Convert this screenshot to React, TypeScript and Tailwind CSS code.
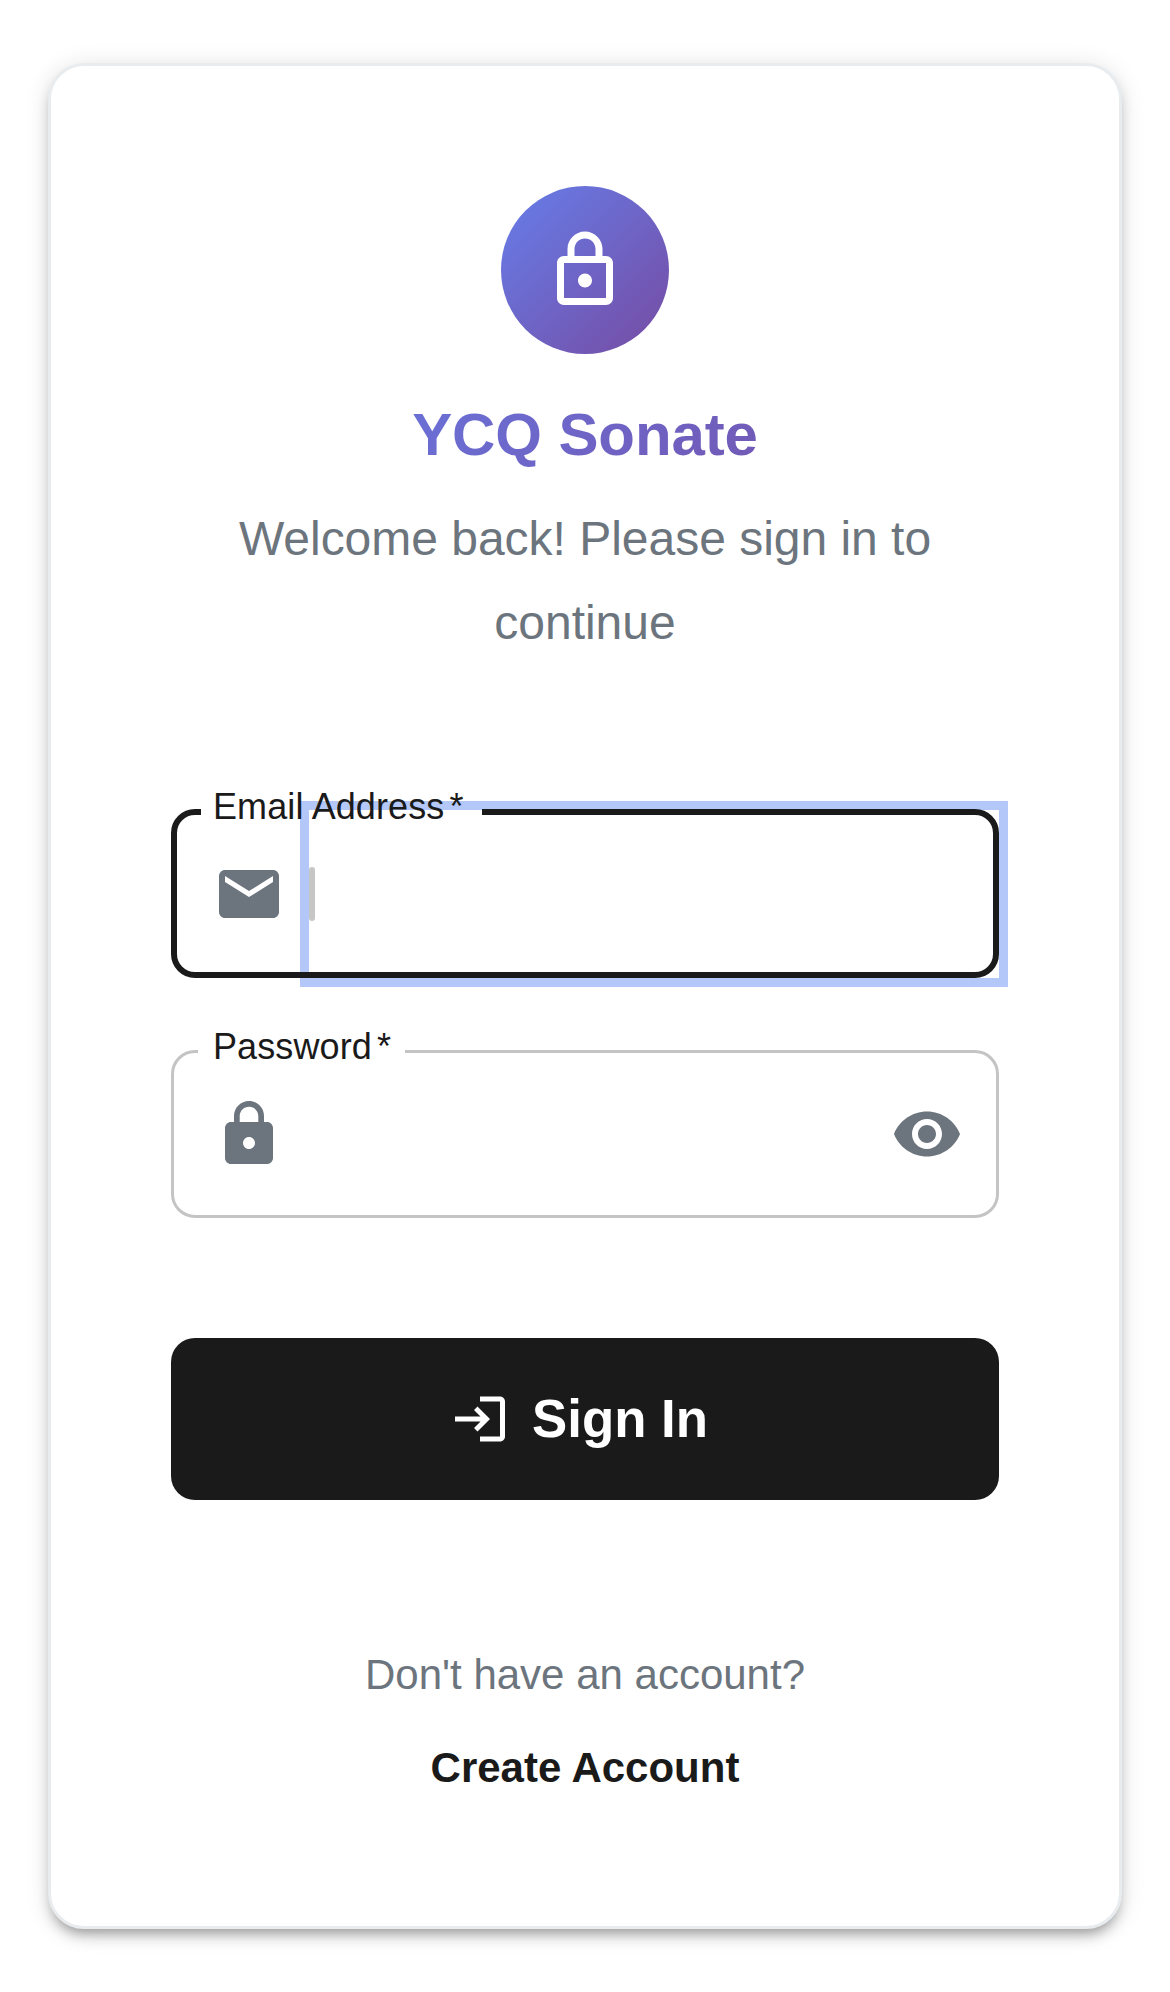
import React from "react";

const paths = {
  lockOutlined:
    "M12 17c1.1 0 2-.9 2-2s-.9-2-2-2-2 .9-2 2 .9 2 2 2zm6-9h-1V6c0-2.76-2.24-5-5-5S7 3.24 7 6v2H6c-1.1 0-2 .9-2 2v10c0 1.1.9 2 2 2h12c1.1 0 2-.9 2-2V10c0-1.1-.9-2-2-2zM9 6c0-1.66 1.34-3 3-3s3 1.34 3 3v2H9V6zM18 20H6V10h12v10z",
  mail: "M20 4H4c-1.1 0-1.99.9-1.99 2L2 18c0 1.1.9 2 2 2h16c1.1 0 2-.9 2-2V6c0-1.1-.9-2-2-2zm0 4l-8 5-8-5V6l8 5 8-5v2z",
  lock: "M18 8h-1V6c0-2.76-2.24-5-5-5S7 3.24 7 6v2H6c-1.1 0-2 .9-2 2v10c0 1.1.9 2 2 2h12c1.1 0 2-.9 2-2V10c0-1.1-.9-2-2-2zm-6 9c-1.1 0-2-.9-2-2s.9-2 2-2 2 .9 2 2-.9 2-2 2zm3.1-9H8.9V6c0-1.71 1.39-3.1 3.1-3.1 1.71 0 3.1 1.39 3.1 3.1v2z",
  eye: "M12 4.5C7 4.5 2.73 7.61 1 12c1.73 4.39 6 7.5 11 7.5s9.27-3.11 11-7.5c-1.73-4.39-6-7.5-11-7.5zM12 17c-2.76 0-5-2.24-5-5s2.24-5 5-5 5 2.24 5 5-2.24 5-5 5zm0-8c-1.66 0-3 1.34-3 3s1.34 3 3 3 3-1.34 3-3-1.34-3-3-3z",
  login:
    "M11 7 9.6 8.4l2.6 2.6H2v2h10.2l-2.6 2.6L11 17l5-5-5-5zm9 12h-8v2h8c1.1 0 2-.9 2-2V5c0-1.1-.9-2-2-2h-8v2h8v14z",
};

function Icon({ name, className }: { name: keyof typeof paths; className: string }) {
  return (
    <svg viewBox="0 0 24 24" fill="currentColor" className={className} aria-hidden="true">
      <path d={paths[name]} />
    </svg>
  );
}

function Label({ text }: { text: string }) {
  return (
    <span className="absolute left-[42px] top-[-27px] flex h-[48px] items-center whitespace-nowrap text-[36px] leading-[48px] tracking-[0.1px] text-[#1a1a1a]">
      {text}
      <span className="ml-[5px]">*</span>
    </span>
  );
}

export default function App() {
  return (
    <main className="flex h-[1992px] w-[1170px] bg-white px-[48px] pt-[63px] font-['Liberation_Sans',Arial,sans-serif]">
      <section className="flex h-[1866px] w-full flex-col rounded-[36px] border-[3px] border-[#e9ecef] bg-white p-[120px] shadow-[0px_9px_9px_-6px_rgba(0,0,0,0.2),0px_9px_12px_0px_rgba(0,0,0,0.14),0px_3px_24px_0px_rgba(0,0,0,0.12)]">
        <header className="flex flex-col items-center text-center">
          <div className="flex size-[168px] items-center justify-center rounded-full bg-[linear-gradient(135deg,#667eea_0%,#764ba2_100%)] text-white">
            <Icon name="lockOutlined" className="size-[84px]" />
          </div>
          <h1 className="mt-[33px] w-full bg-[linear-gradient(135deg,#667eea_0%,#764ba2_100%)] bg-clip-text text-[60px] font-bold leading-[96px] tracking-[-0.1px] text-transparent">
            YCQ Sonate
          </h1>
          <p className="mt-[14px] text-[48px] leading-[84px] tracking-[-0.02px] text-[#6c757d]">
            Welcome back! Please sign in to continue
          </p>
        </header>

        <form className="mt-[145px] flex flex-col" onSubmit={(e) => e.preventDefault()}>
          <div className="relative flex h-[168px] items-center pl-[42px]">
            <Icon name="mail" className="size-[72px] text-[#6c757d]" />
            <div className="absolute inset-y-0 left-[138px] right-0 outline-[9px] outline-solid outline-[#b3c8f8]" />
            <div className="relative ml-[24px] h-[54px] w-[6px] rounded-[3px] bg-[#c6c6c6]" />
            <div className="absolute inset-x-0 -top-px bottom-0 rounded-[24px] border-[6px] border-[#1a1a1a] [clip-path:polygon(0_0,30px_0,30px_10px,311px_10px,311px_0,100%_0,100%_100%,0_100%)]" />
            <Label text="Email Address" />
          </div>

          <div className="relative mt-[72px] flex h-[168px] items-center justify-between pl-[42px] pr-[36px] text-[#6c757d]">
            <Icon name="lock" className="size-[72px]" />
            <Icon name="eye" className="size-[72px]" />
            <div className="absolute inset-0 rounded-[24px] border-[3px] border-[#c4c4c4] [clip-path:polygon(0_0,27px_0,27px_10px,234px_10px,234px_0,100%_0,100%_100%,0_100%)]" />
            <Label text="Password" />
          </div>

          <button className="mt-[120px] flex h-[162px] items-center justify-center rounded-[24px] bg-[#1a1a1a] text-[52.8px] font-bold text-white">
            <Icon name="login" className="-ml-[12px] mr-[22px] size-[60px]" />
            Sign In
          </button>
        </form>

        <footer className="mt-[143px] flex flex-col items-center text-[42px]">
          <p className="leading-[63px] text-[#6c757d]">Don't have an account?</p>
          <a className="mt-[30px] font-bold leading-[63px] text-[#1a1a1a]">Create Account</a>
        </footer>
      </section>
    </main>
  );
}
